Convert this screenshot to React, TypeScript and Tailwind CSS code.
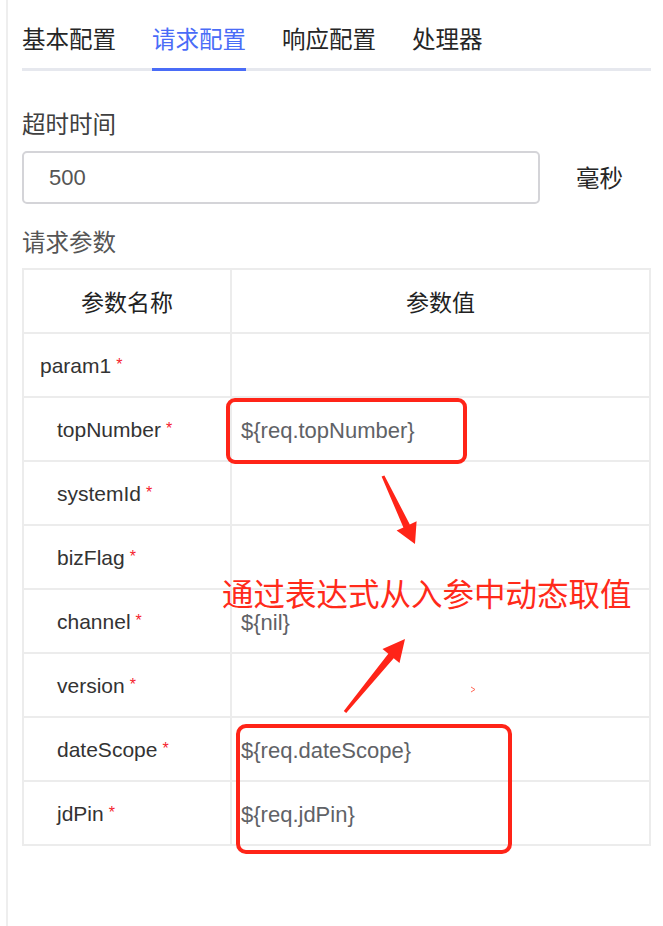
import React from "react";

const cjk = { fontFamily: '"Noto Sans CJK SC", "Noto Sans", sans-serif' };
const latin = { fontFamily: '"Liberation Sans", Arial, "Noto Sans CJK SC", sans-serif' };

type Row = { name: string; value?: string; child: boolean };

const rows: Row[] = [
  { name: "param1", child: false },
  { name: "topNumber", value: "${req.topNumber}", child: true },
  { name: "systemId", child: true },
  { name: "bizFlag", child: true },
  { name: "channel", value: "${nil}", child: true },
  { name: "version", child: true },
  { name: "dateScope", value: "${req.dateScope}", child: true },
  { name: "jdPin", value: "${req.jdPin}", child: true },
];

const tabs = ["基本配置", "请求配置", "响应配置", "处理器"];

export default function App() {
  return (
    <div className="relative w-[663px] min-h-[926px] bg-white overflow-hidden">
      <div className="ml-[6px] min-h-[926px] border-l-2 border-[#eeeeee] pl-[14px] pr-[12px] pt-[22px]">
        {/* Tabs */}
        <div className="flex border-b-[3px] border-[#e6e8ee]" style={cjk}>
          {tabs.map((t, i) => (
            <div
              key={t}
              className={
                i === 1
                  ? "mr-[36px] -mb-[3px] border-b-[3px] border-[#4a6cf7] pb-[14px] text-[23.5px] leading-[32px] text-[#4a6cf7]"
                  : "mr-[36px] pb-[14px] text-[23.5px] leading-[32px] text-[#262626]"
              }
            >
              {t}
            </div>
          ))}
        </div>

        {/* Timeout */}
        <div className="mt-[37px] text-[23.5px] leading-[30px] text-[#404040]" style={cjk}>
          超时时间
        </div>
        <div className="mt-[13px] flex items-center">
          <div
            className="flex h-[53px] w-[518px] items-center rounded-[5px] border-2 border-[#d4d4d8] pl-[25px] text-[22px] text-[#555]"
            style={latin}
          >
            500
          </div>
          <div className="ml-[36px] text-[23.5px] text-[#262626]" style={cjk}>
            毫秒
          </div>
        </div>

        {/* Params */}
        <div className="mt-[22px] text-[23.5px] leading-[30px] text-[#555]" style={cjk}>
          请求参数
        </div>
        <div className="mt-[12px] border-2 border-b-0 border-[#ececec]">
          <div className="flex h-[64px] border-b-2 border-[#ececec] text-[23px] text-[#222]" style={cjk}>
            <div className="flex w-[208px] items-center justify-center border-r-2 border-[#ececec]">参数名称</div>
            <div className="flex flex-1 items-center justify-center">参数值</div>
          </div>
          {rows.map((r) => (
            <div key={r.name} className="flex h-[64px] border-b-2 border-[#ececec]" style={latin}>
              <div
                className={
                  r.child
                    ? "flex w-[208px] items-center border-r-2 border-[#ececec] pl-[33px] pt-[2px] text-[21px] text-[#333]"
                    : "flex w-[208px] items-center border-r-2 border-[#ececec] pl-[16px] pt-[2px] text-[21px] text-[#333]"
                }
              >
                <span>{r.name}</span>
                <span className="ml-[5px] -translate-y-[1px] text-[16px] text-[#f5222d]">*</span>
              </div>
              <div className="flex flex-1 items-center pl-[9px] pt-[2px] text-[22px] text-[#606266]">
                {r.value ?? ""}
              </div>
            </div>
          ))}
        </div>
      </div>

      {/* Annotations */}
      <div className="absolute left-[226px] top-[398px] h-[66px] w-[241px] rounded-[9px] border-4 border-[#ff2418]" />
      <div className="absolute left-[236px] top-[724px] h-[130px] w-[276px] rounded-[10px] border-4 border-[#ff2418]" />
      <div
        className="absolute left-[222px] top-[572px] whitespace-nowrap text-[31.5px] leading-[40px] text-[#ff2a1a]"
        style={cjk}
      >
        通过表达式从入参中动态取值
      </div>
      <svg className="absolute left-0 top-0" width="663" height="926" viewBox="0 0 663 926">
        <polygon
          fill="#ff2418"
          points="384.4,475.4 409.8,524.4 416.6,521.3 415,544 396.6,530.5 403.4,527.4 381.6,476.6"
        />
        <polygon
          fill="#ff2418"
          points="346.2,713 393.7,658.2 399.5,663 405,639 382.5,649 388.3,653.8 343.8,711"
        />
        <path d="M471 687 L475 689.5 L471 692" stroke="#ff6a5a" strokeWidth="1" fill="none" />
      </svg>
    </div>
  );
}
